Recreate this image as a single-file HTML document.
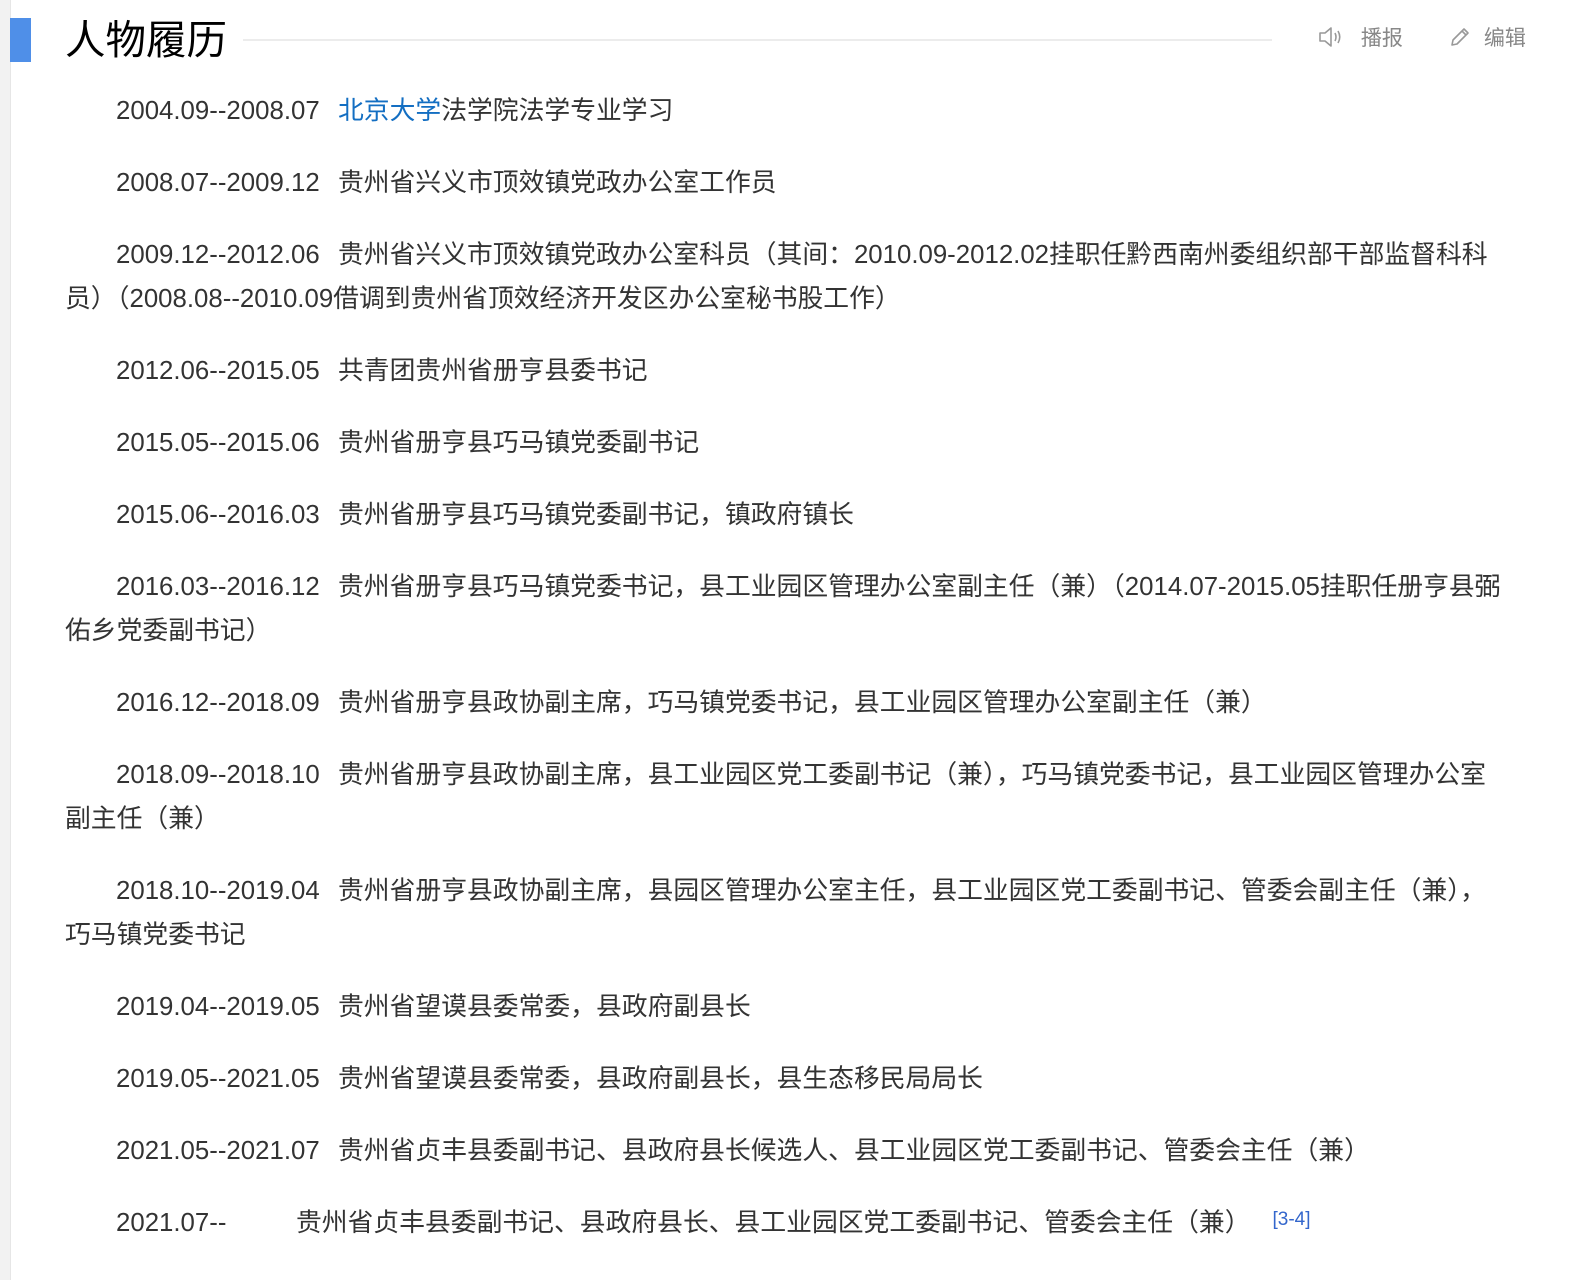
<!DOCTYPE html>
<html><head><meta charset="utf-8">
<style>
html,body{margin:0;padding:0;background:#fff;width:1585px;height:1280px;overflow:hidden}
body{font-family:"Liberation Sans","Noto Sans CJK SC",sans-serif;color:#333;position:relative}
.lstripe{position:absolute;left:0;top:0;width:10px;height:1280px;background:#f2f2f2;border-right:1px solid #e6e6e6}
.bar{position:absolute;left:10px;top:18px;width:21px;height:44px;background:#4f8fe8}
.title{position:absolute;left:65px;top:14px;font-size:40.5px;line-height:52px;color:#000;font-family:"Liberation Sans","Noto Sans CJK SC",sans-serif}
.hline{position:absolute;left:243px;top:39px;width:1029px;height:2px;background:#ececec}
.tools{position:absolute;top:24px;font-size:21px;color:#888;line-height:30px}
.c{position:absolute;left:65px;top:89px;width:1500px;font-size:25.8px;line-height:44px}
.c p{margin:0 0 28px 0;text-indent:51px;white-space:nowrap}
.d{display:inline-block;width:222px;text-indent:0}
.a{color:#136ec2}
sup{color:#3366cc;font-size:19px;position:relative;top:-6px;vertical-align:baseline;margin-left:22px}
</style></head><body>
<div class="lstripe"></div>
<div class="bar"></div>
<div class="title">人物履历</div>
<div class="hline"></div>
<div class="tools" style="left:1317px">
<svg width="28" height="24" viewBox="0 0 28 24" style="vertical-align:-4px"><path d="M3 8h5l6-5v18l-6-5H3z" fill="none" stroke="#999" stroke-width="1.6" stroke-linejoin="round"/><path d="M18 8q2 4 0 8M21 6q3.5 6 0 12" fill="none" stroke="#999" stroke-width="1.6"/></svg>
<span style="margin-left:10px">播报</span></div>
<div class="tools" style="left:1448px">
<svg width="24" height="24" viewBox="0 0 24 24" style="vertical-align:-4px"><path d="M4 20l1-5L16 4l4 4L9 19z M14 6l4 4" fill="none" stroke="#999" stroke-width="1.6" stroke-linejoin="round"/></svg>
<span style="margin-left:6px">编辑</span></div>
<div class="c">
<p><span class="d">2004.09--2008.07</span><span class="a">北京大学</span>法学院法学专业学习</p>
<p><span class="d">2008.07--2009.12</span>贵州省兴义市顶效镇党政办公室工作员</p>
<p><span class="d">2009.12--2012.06</span>贵州省兴义市顶效镇党政办公室科员（其间：2010.09-2012.02挂职任黔西南州委组织部干部监督科科<br>员）（2008.08--2010.09借调到贵州省顶效经济开发区办公室秘书股工作）</p>
<p><span class="d">2012.06--2015.05</span>共青团贵州省册亨县委书记</p>
<p><span class="d">2015.05--2015.06</span>贵州省册亨县巧马镇党委副书记</p>
<p><span class="d">2015.06--2016.03</span>贵州省册亨县巧马镇党委副书记，镇政府镇长</p>
<p><span class="d">2016.03--2016.12</span>贵州省册亨县巧马镇党委书记，县工业园区管理办公室副主任（兼）（2014.07-2015.05挂职任册亨县弼<br>佑乡党委副书记）</p>
<p><span class="d">2016.12--2018.09</span>贵州省册亨县政协副主席，巧马镇党委书记，县工业园区管理办公室副主任（兼）</p>
<p><span class="d">2018.09--2018.10</span>贵州省册亨县政协副主席，县工业园区党工委副书记（兼），巧马镇党委书记，县工业园区管理办公室<br>副主任（兼）</p>
<p><span class="d">2018.10--2019.04</span>贵州省册亨县政协副主席，县园区管理办公室主任，县工业园区党工委副书记、管委会副主任（兼），<br>巧马镇党委书记</p>
<p><span class="d">2019.04--2019.05</span>贵州省望谟县委常委，县政府副县长</p>
<p><span class="d">2019.05--2021.05</span>贵州省望谟县委常委，县政府副县长，县生态移民局局长</p>
<p><span class="d">2021.05--2021.07</span>贵州省贞丰县委副书记、县政府县长候选人、县工业园区党工委副书记、管委会主任（兼）</p>
<p><span class="d" style="width:180px">2021.07--</span>贵州省贞丰县委副书记、县政府县长、县工业园区党工委副书记、管委会主任（兼）<sup>[3-4]</sup></p>
</div>
</body></html>
